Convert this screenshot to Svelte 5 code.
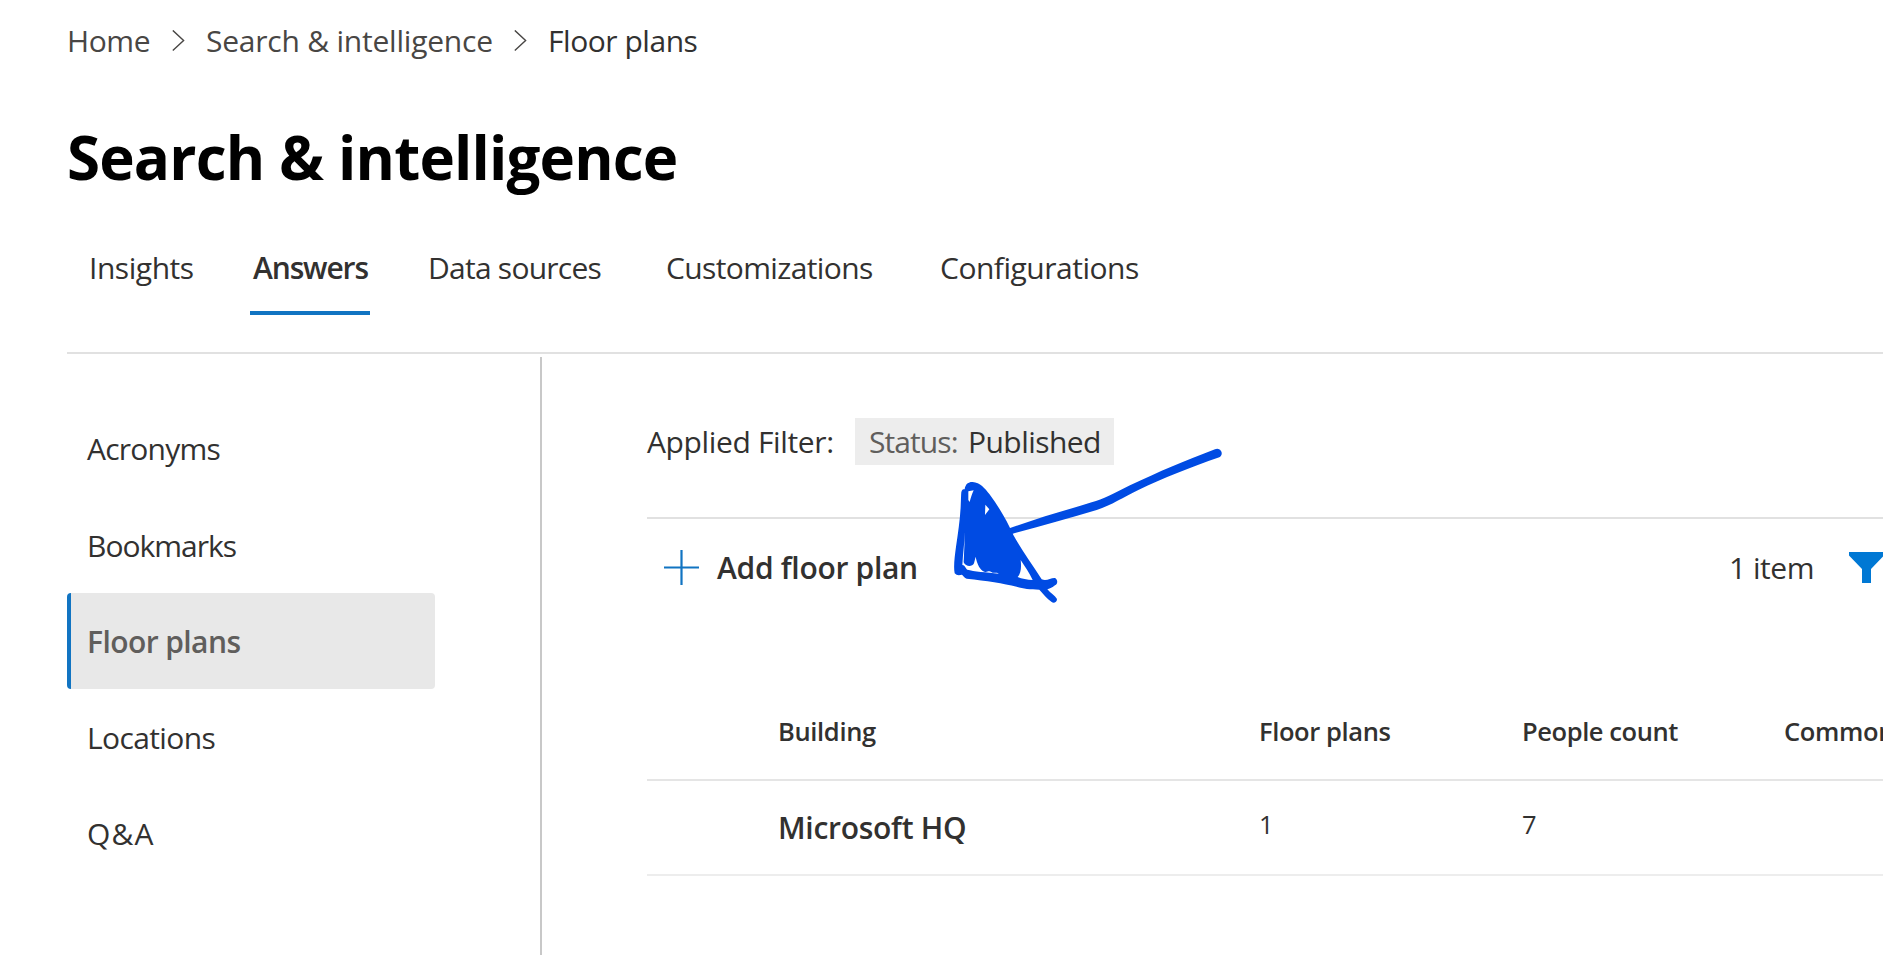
<script>
  const tabs = [
    { id: 'insights', label: 'Insights' },
    { id: 'answers', label: 'Answers' },
    { id: 'sources', label: 'Data sources' },
    { id: 'customizations', label: 'Customizations' },
    { id: 'configurations', label: 'Configurations' },
  ];
  const answers = [
    { id: 'acronyms', label: 'Acronyms' },
    { id: 'bookmarks', label: 'Bookmarks' },
    { id: 'floors', label: 'Floor plans' },
    { id: 'locations', label: 'Locations' },
    { id: 'qna', label: 'Q&A' },
  ];
  const rows = [{ building: 'Microsoft HQ', plans: 1, people: 7 }];
  let activeTab = $state('answers');
  let activeAnswer = $state('floors');
</script>

{#snippet chevron()}
  <svg class="chevron" viewBox="0 0 13 21" aria-hidden="true"><path d="M0.8 0.4L11.6 10.4L0.8 20.4" /></svg>
{/snippet}

<div class="page">
  <nav class="breadcrumb" aria-label="Breadcrumb">
    <span class="home">Home</span>
    {@render chevron()}
    <span class="section">Search &amp; intelligence</span>
    {@render chevron()}
    <span class="current">Floor plans</span>
  </nav>

  <h1>Search &amp; intelligence</h1>

  <div class="tabs" role="tablist">
    {#each tabs as tab}
      <button class={['tab', tab.id, { active: activeTab === tab.id }]} role="tab" aria-selected={activeTab === tab.id} onclick={() => (activeTab = tab.id)}>{tab.label}</button>
    {/each}
  </div>

  <div class="body">
    <aside>
      {#each answers as item}
        <button class={['item', item.id, { selected: activeAnswer === item.id }]} onclick={() => (activeAnswer = item.id)}>{item.label}</button>
      {/each}
    </aside>

    <main>
      <div class="filters">
        <span class="caption">Applied Filter:</span>
        <div class="chip"><span class="key">Status:</span><span class="value">Published</span></div>
      </div>

      <div class="toolbar">
        <button class="add">
          <svg viewBox="0 0 35 35" aria-hidden="true"><path d="M17.5 0V35M0 17.5H35" /></svg>
          <span>Add floor plan</span>
        </button>
        <span class="count">1 item</span>
        <svg class="funnel" viewBox="0 0 35 31" aria-hidden="true"><path d="M0 0H35V3.5L22 17V31H13V17L0 3.5Z" /></svg>
      </div>

      <div class="table" role="table">
        <div class="row head" role="row">
          <span class="h-building">Building</span>
          <span class="h-plans">Floor plans</span>
          <span class="h-people">People count</span>
          <span class="h-common">Common</span>
        </div>
        {#each rows as row}
          <div class="row" role="row">
            <span class="building">{row.building}</span>
            <span class="num">{row.plans}</span>
            <span class="num">{row.people}</span>
          </div>
        {/each}
      </div>
    </main>
  </div>

  <svg class="ink" viewBox="0 0 930 570" aria-hidden="true">
    <path d="M855 58C760 94 690 124 600 166C550 192 520 207 485 217C400 243 320 265 238 295L246 312C330 288 420 265 500 240C545 225 580 202 625 180C700 145 780 112 868 82A12.5 12.5 0 0 0 855 58Z" />
    <path fill-rule="evenodd" d="M104 178C106 160 118 155 128 156C150 158 165 175 178 192C205 228 230 270 250 315C275 360 305 400 335 448C350 455 362 443 375 444C385 450 383 462 375 466C365 474 358 476 352 478C362 490 375 497 381 507C381 518 370 521 365 516C350 505 340 492 328 479C300 478 280 476 260 470C220 460 170 452 110 446C104 444 100 438 96 434C88 436 80 437 74 430C70 410 74 380 78 350C84 310 90 270 92 230C93 210 93 195 94 186C96 178 100 178 104 178Z
      M115 184L131 181C126 192 122 205 119 216L115 210Z
      M166 224L178 238L165 255Z
      M105 305L101 397C108 412 127 411 132 400L137 380C141 402 150 420 163 425C172 428 176 420 184 426C192 432 200 424 206 431C170 427 130 424 112 419C107 416 105 405 97 405C99 370 103 340 105 305Z
      M272 390C285 410 298 428 308 450C292 450 275 446 263 441C272 430 275 415 272 390Z" />
  </svg>
</div>

<style>
  :global(body) { background: #fff; }
  .page {
    position: relative;
    box-sizing: border-box;
    height: 955px;
    padding: 21px 0 0 67px;
    overflow: hidden;
    display: flex;
    flex-direction: column;
    background: #fff;
    color: #323130;
    font: 400 30px/40px "Open Sans", sans-serif;
    white-space: nowrap;
  }
  button {
    border: 0;
    padding: 0;
    background: none;
    color: inherit;
    font: inherit;
    text-align: left;
    cursor: pointer;
  }
  span { display: block; }

  .breadcrumb { display: flex; align-items: center; height: 40px; color: #484644; }
  .home { width: 105px; letter-spacing: -0.4px; }
  .section { width: 308px; letter-spacing: -0.22px; margin-left: 21px; }
  .current { margin-left: 21px; letter-spacing: -0.46px; color: #323130; }
  .chevron { flex: none; width: 13px; height: 21px; margin-bottom: 2px; fill: none; stroke: #484644; stroke-width: 1.4; }

  h1 { margin: 56px 0 0; color: #000; font-size: 60px; line-height: 80px; font-weight: 700; letter-spacing: -0.82px; }

  .tabs {
    display: grid;
    grid-template-columns: 165px 174px 239px 274px auto;
    margin-top: 51px;
    padding: 0 0 37px 21px;
    border-bottom: 2px solid #e1e1e1;
  }
  .tab { height: 67px; padding-bottom: 23px; border-bottom: 4px solid transparent; }
  .tab.active { width: 120px; margin-left: -3px; padding-left: 3px; border-color: #1174c2; font-weight: 600; }
  .tab.insights, .tab.sources { padding-left: 1px; }
  .insights { letter-spacing: -0.46px; }
  .answers { letter-spacing: -1.13px; }
  .sources { letter-spacing: -0.75px; }
  .customizations { letter-spacing: -0.63px; }
  .configurations { letter-spacing: -0.49px; }

  .body { display: flex; flex: 1; min-height: 0; }
  aside { box-sizing: border-box; flex: none; width: 475px; margin-top: 3px; padding-top: 44px; border-right: 2px solid #c8c8c8; }
  .item { display: block; box-sizing: border-box; width: 368px; height: 96px; padding: 1px 0 0 16px; border-left: 4px solid transparent; border-radius: 4px; }
  .item.selected { border-color: #1174c2; background: #e8e8e8; color: #605e5c; font-weight: 600; }
  .acronyms { padding-top: 0; letter-spacing: -0.77px; }
  .bookmarks { letter-spacing: -0.99px; }
  .floors { letter-spacing: -0.58px; }
  .locations { letter-spacing: -0.63px; }
  .qna { letter-spacing: 1.2px; }

  main { flex: 1; min-width: 0; margin-left: 105px; padding-top: 64px; }
  .filters { display: flex; align-items: center; height: 47px; }
  .caption { width: 208px; padding-top: 1px; letter-spacing: -0.36px; }
  .chip { display: flex; box-sizing: border-box; width: 259px; padding: 4px 0 3px 14px; background: #ededed; }
  .key { width: 99px; letter-spacing: -0.92px; color: #605e5c; }
  .value { letter-spacing: -0.55px; }

  .toolbar { display: flex; align-items: center; height: 97px; margin-top: 52px; border-top: 2px solid #e1e1e1; }
  .add { display: flex; align-items: center; gap: 18px; margin-left: 17px; font-weight: 600; letter-spacing: -0.3px; }
  .add svg { width: 35px; height: 35px; fill: none; stroke: #1174c2; stroke-width: 2.2; }
  .count { margin-left: auto; letter-spacing: -0.46px; }
  .funnel { flex: none; width: 35px; height: 31px; margin: 0 -1px 0 35px; fill: #0078d4; }

  .table { margin-top: 67px; }
  .row {
    display: grid;
    grid-template-columns: 481px 263px 262px auto;
    align-items: center;
    height: 93px;
    padding-left: 131px;
    border-bottom: 2px solid #ededed;
  }
  .head { height: 96px; border-color: #e5e5e5; font-size: 25.5px; font-weight: 600; }
  .h-building { letter-spacing: -0.34px; }
  .h-plans { letter-spacing: -0.4px; }
  .h-people { letter-spacing: -0.42px; }
  .h-common { letter-spacing: -0.35px; }
  .building { font-weight: 600; letter-spacing: -0.28px; }
  .num { padding-bottom: 7px; font-size: 25.5px; }

  .ink { position: absolute; left: 930px; top: 430px; width: 310px; height: 190px; fill: #004be3; }
</style>
